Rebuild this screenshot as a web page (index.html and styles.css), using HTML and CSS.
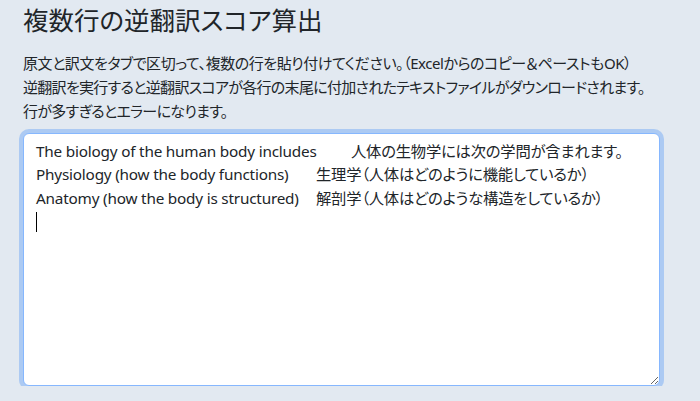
FILE: index.html
```html
<!DOCTYPE html>
<html lang="ja">
<head>
<meta charset="utf-8">
<title>複数行の逆翻訳スコア算出</title>
<link rel="stylesheet" href="styles.css">
</head>
<body>
<main class="page">
  <h1 class="title">複数行の逆翻訳スコア算出</h1>
  <p class="lead"><span class="lead-line lead-line--loose">原文と訳文をタブで区切って、複数の行を貼り付けてください。（Excelからのコピー＆ペーストもOK）</span><span class="lead-line">逆翻訳を実行すると逆翻訳スコアが各行の末尾に付加されたテキストファイルがダウンロードされます。</span><span class="lead-line">行が多すぎるとエラーになります。</span></p>
  <div class="field">
    <textarea class="input" autofocus>The biology of the human body includes	人体の生物学には次の学問が含まれます。
Physiology (how the body functions)	生理学（人体はどのように機能しているか）
Anatomy (how the body is structured)	解剖学（人体はどのような構造をしているか）
</textarea>
    <span class="caret" aria-hidden="true"></span>
  </div>
</main>
</body>
</html>
```
FILE: styles.css
```css
html, body {
  margin: 0;
  padding: 0;
}
body {
  background: #e2e9f1;
  color: #212529;
  font-family: "Noto Sans", "Noto Sans CJK JP", sans-serif;
  font-size: 16px;
  line-height: 1.5;
}
.page {
  padding: 0 23px;
}
.title {
  margin: 0;
  padding-top: 5px;
  font-size: 25.5px;
  font-weight: 400;
  line-height: 1.2;
  font-feature-settings: "palt";
}
.lead {
  margin: 15px 0 10px;
  font-size: 15px;
  line-height: 24px;
  letter-spacing: -0.7px;
  font-feature-settings: "palt";
}
.lead-line {
  display: block;
  white-space: nowrap;
}
.lead-line--loose {
  letter-spacing: -0.45px;
}
.field {
  position: relative;
  display: flex;
}
.input {
  box-sizing: border-box;
  width: 637px;
  height: 253px;
  margin: 0;
  padding: 6px 12px;
  font-family: inherit;
  font-size: 15.3px;
  line-height: 23.5px;
  letter-spacing: -0.2px;
  color: #212529;
  caret-color: transparent;
  background: #fff;
  border: 1px solid #86b7fe;
  border-radius: 6px;
  outline: none;
  box-shadow: 0 0 0 4px rgba(13, 110, 253, 0.25);
  tab-size: 35px;
  font-feature-settings: "palt";
}
.caret {
  position: absolute;
  left: 13px;
  top: 79px;
  width: 1px;
  height: 20px;
  background: #000;
}
```
